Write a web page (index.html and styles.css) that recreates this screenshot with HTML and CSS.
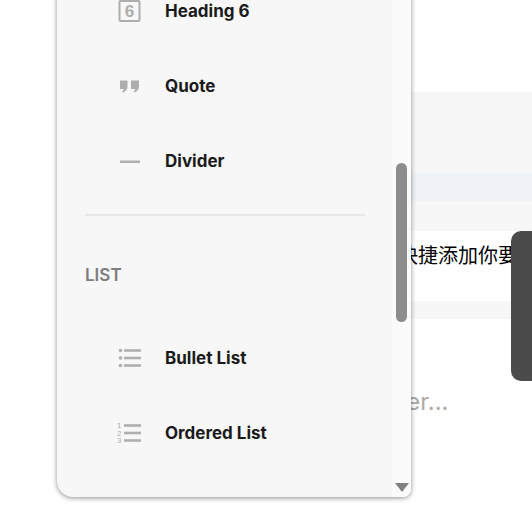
FILE: index.html
```html
<!DOCTYPE html>
<html lang="en">
<head>
<meta charset="utf-8">
<title>Insert menu</title>
<link rel="stylesheet" href="styles.css">
</head>
<body>
<main class="page">
  <div class="band band-grey band-top"></div>
  <div class="band band-blue"></div>
  <div class="band band-grey band-mid"></div>
  <div class="band band-text">快捷添加你要</div>
  <div class="band band-grey band-low"></div>
  <div class="placeholder">Enter...</div>

  <aside class="side-handle"></aside>

  <nav class="menu">
    <div class="menu-list">
      <div class="item">
        <svg class="icon" viewBox="0 0 24 24"><rect x="2.500" y="2" width="20" height="20" rx="1" class="stroke-box"/><text x="12.500" y="18" class="num-six">6</text></svg>
        <span class="label">Heading 6</span>
      </div>
      <div class="item">
        <svg class="icon" viewBox="0 0 24 24"><path class="fill" d="M3 6.500h7.500v6.500c0 2.500-2 4.500-4.500 5.500l-1-1c1-.8 1.500-1.500 1.500-2.500H3zM14 6.500h8v6.500c0 2.500-2 4.500-4.500 5.500l-1-1c1-.8 1.500-1.500 1.500-2.500h-4z"/></svg>
        <span class="label">Quote</span>
      </div>
      <div class="item">
        <svg class="icon" viewBox="0 0 24 24"><rect class="fill" x="3" y="11.500" width="20" height="2.500"/></svg>
        <span class="label">Divider</span>
      </div>
      <hr class="rule">
      <div class="section">LIST</div>
      <div class="item">
        <svg class="icon" viewBox="0 0 24 24"><g class="fill"><circle cx="3.500" cy="4.500" r="1.800"/><circle cx="3.500" cy="12" r="1.800"/><circle cx="3.500" cy="19.500" r="1.800"/><rect x="7" y="3.200" width="17" height="2.600"/><rect x="7" y="10.700" width="17" height="2.600"/><rect x="7" y="18.200" width="17" height="2.600"/></g></svg>
        <span class="label">Bullet List</span>
      </div>
      <div class="item">
        <svg class="icon" viewBox="0 0 24 24"><g class="fill"><rect x="7" y="3.200" width="17" height="2.600"/><rect x="7" y="10.700" width="17" height="2.600"/><rect x="7" y="18.200" width="17" height="2.600"/></g><text x="0" y="7" class="num">1</text><text x="0" y="14.500" class="num">2</text><text x="0" y="22" class="num">3</text></svg>
        <span class="label">Ordered List</span>
      </div>
    </div>
    <div class="scrollbar">
      <div class="thumb"></div>
      <div class="arrow"></div>
    </div>
  </nav>
</main>
</body>
</html>
```
FILE: styles.css
```css
* { box-sizing: border-box; }
html, body { margin: 0; padding: 0; background: #fff; }
.page {
  position: relative;
  width: 532px;
  height: 509px;
  overflow: hidden;
  padding: 92px 0 0 100px;
  font-family: Inter, "Liberation Sans", sans-serif;
}
.band { width: 100%; }
.band-grey { background: #f7f7f7; }
.band-top { height: 81px; }
.band-blue { height: 28px; background: #eff2f7; }
.band-mid { height: 30px; }
.band-text {
  height: 70px;
  padding: 11px 0 0 298px;
  background: #fff;
  color: #000;
  font: 20px/26px "Noto Sans CJK SC", sans-serif;
  white-space: nowrap;
}
.band-low { height: 18px; }
.placeholder {
  padding: 67px 0 0 270px;
  color: #aaa;
  font-size: 24px;
  line-height: 32px;
}
.side-handle {
  position: absolute;
  left: 511px;
  top: 231px;
  width: 40px;
  height: 150px;
  border-radius: 10px;
  background: #4b4b4b;
}
.menu {
  position: absolute;
  left: 57px;
  top: -27px;
  width: 354px;
  height: 524px;
  display: flex;
  overflow: hidden;
  border-radius: 0 0 8px 16px;
  background: #f7f7f7;
  box-shadow: 0 1px 5px rgba(0, 0, 0, .45);
}
.menu-list {
  flex: 1;
  padding: 0 27px 0 28px;
}
.item {
  display: flex;
  align-items: center;
  gap: 24px;
  height: 75px;
  padding-left: 32px;
}
.icon { width: 24px; height: 24px; flex: none; }
.fill { fill: #aeaeae; }
.stroke-box { fill: none; stroke: #aeaeae; stroke-width: 2; }
.num-six { font: 700 17px "Liberation Sans", sans-serif; fill: #aeaeae; text-anchor: middle; }
.num { font: 8px "Liberation Sans", sans-serif; fill: #aeaeae; }
.label {
  color: #1a1a1a;
  font-size: 17px;
  font-weight: 700;
  line-height: 24px;
  white-space: nowrap;
}
.rule {
  height: 2px;
  margin: 16px 0 0;
  border: 0;
  background: #e8e8e8;
}
.section {
  height: 104px;
  padding-top: 49px;
  color: #7d7d7d;
  font-size: 17px;
  font-weight: 600;
  line-height: 20px;
}
.scrollbar {
  position: relative;
  flex: none;
  width: 19px;
  background: #fbfbfb;
}
.thumb {
  position: absolute;
  left: 4px;
  top: 190px;
  width: 11px;
  height: 159px;
  border-radius: 6px;
  background: #8c8c8c;
}
.arrow {
  position: absolute;
  left: 3px;
  bottom: 5px;
  width: 0;
  height: 0;
  border-left: 7px solid transparent;
  border-right: 7px solid transparent;
  border-top: 9px solid #808080;
}
```
